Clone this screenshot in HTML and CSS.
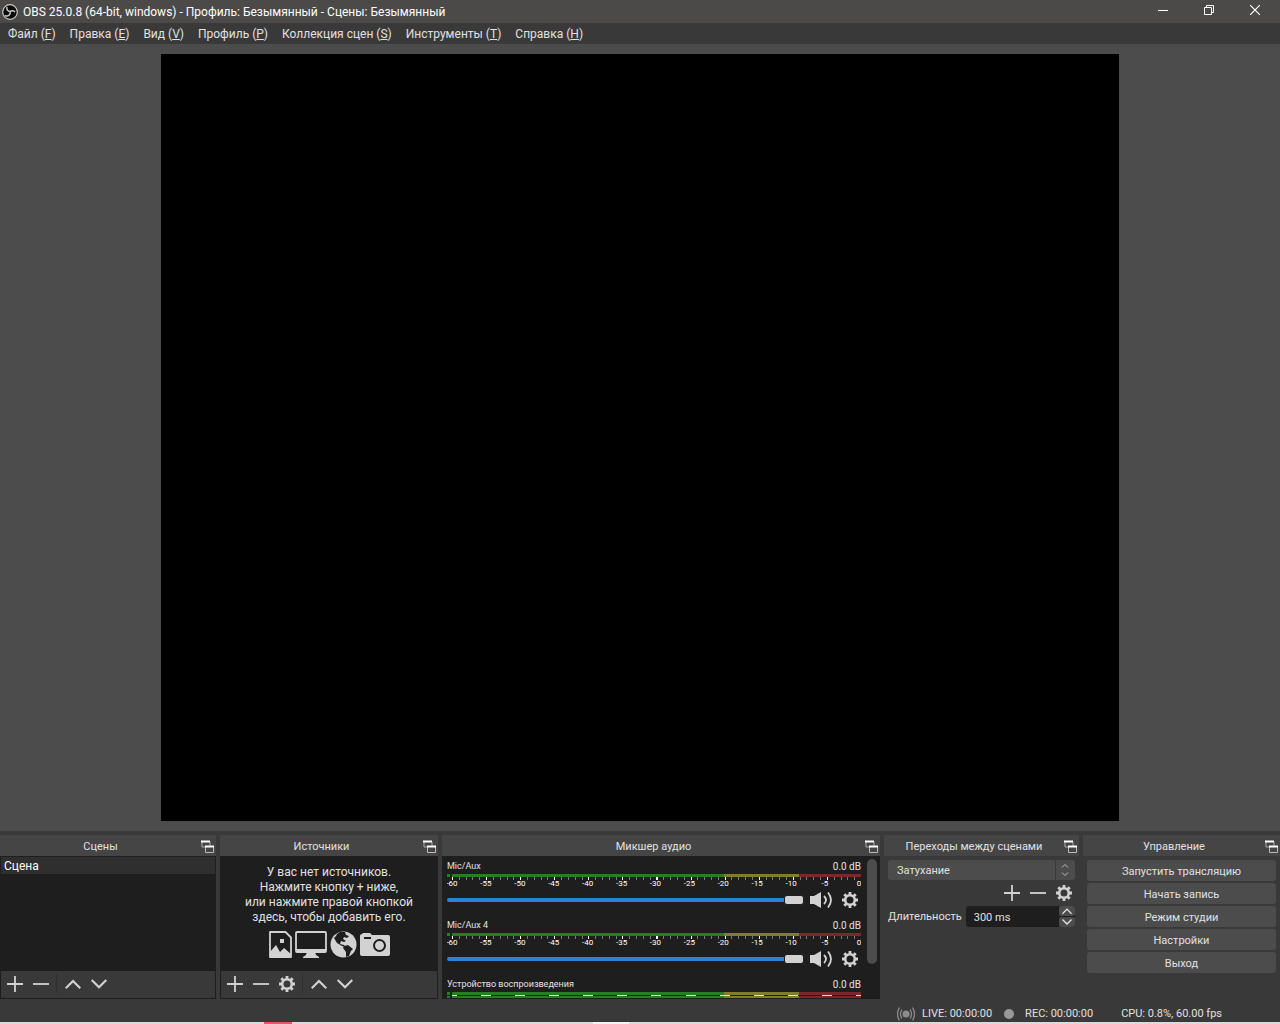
FILE: index.html
```
<!DOCTYPE html>
<html lang="ru">
<head>
    <meta charset="UTF-8">
    <title>OBS 25.0.8</title>
    <link rel="stylesheet" href="styles.css">
</head>
<body>
<svg class="sprite" aria-hidden="true">
    <symbol id="i-float" viewBox="0 0 14 14">
        <path d="M1 2v5h8V2" fill="none" stroke="#aaa"/>
        <path d="M0 1.500h9" stroke="#fff" stroke-width="2"/>
        <rect x="4" y="6" width="9" height="7" fill="#454545"/>
        <path d="M4.500 7v5.500h8V7" fill="none" stroke="#bbb"/>
        <path d="M4 6.500h9" stroke="#fff" stroke-width="2"/>
    </symbol>
    <symbol id="i-plus" viewBox="0 0 16 16"><path d="M8 0v16M0 8h16" stroke="currentColor" stroke-width="1.800"/></symbol>
    <symbol id="i-minus" viewBox="0 0 16 16"><path d="M0 8h16" stroke="currentColor" stroke-width="1.800"/></symbol>
    <symbol id="i-up" viewBox="0 0 16 16"><path d="M.7 12.300L8 5l7.300 7.300" fill="none" stroke="currentColor" stroke-width="2.200"/></symbol>
    <symbol id="i-down" viewBox="0 0 16 16"><path d="M.7 4L8 11.300 15.300 4" fill="none" stroke="currentColor" stroke-width="2.200"/></symbol>
    <symbol id="i-gear" viewBox="0 0 16 16">
        <circle cx="8" cy="8" r="4.800" fill="none" stroke="currentColor" stroke-width="2.600"/>
        <path d="M8 0v3M8 13v3M0 8h3M13 8h3M2.300 2.300l2.200 2.200M11.500 11.500l2.200 2.200M2.300 13.700l2.200-2.200M11.500 4.500l2.200-2.200" stroke="currentColor" stroke-width="2.800"/>
    </symbol>
    <symbol id="i-speaker" viewBox="0 0 22 16">
        <path d="M0 4h4l7-4v16l-7-4H0z" fill="currentColor"/>
        <path d="M14 4q4 4 0 8M18 .5q6 7.500 0 15" fill="none" stroke="currentColor" stroke-width="1.800"/>
    </symbol>
</svg>

<header class="titlebar">
    <svg class="logo" viewBox="0 0 16 16">
        <circle cx="8" cy="8" r="7.300" fill="#0c0c0c" stroke="#c8c8c8" stroke-width="1.200"/>
        <path d="M5 3c-.6 2.500.8 4.400 3 4.600M8 7.600c1.500-1.400 3.800-1.300 5 .6M8 7.600c.6 2-.4 4-2.600 4.400-1 .2-1.900-.1-2.600-.8" fill="none" stroke="#c8c8c8" stroke-width="1.500"/>
    </svg>
    <h1>OBS 25.0.8 (64-bit, windows) - Профиль: Безымянный - Сцены: Безымянный</h1>
    <div class="window-buttons">
        <button aria-label="Свернуть"><svg viewBox="0 0 10 10"><path d="M0 5.500h10" stroke="#fff"/></svg></button>
        <button aria-label="Восстановить"><svg viewBox="0 0 10 10"><path d="M.5 2.500h7v7h-7zM2.500 2V.5h7v7H8" fill="none" stroke="#fff"/></svg></button>
        <button aria-label="Закрыть"><svg viewBox="0 0 10 10"><path d="M0 0l10 10M10 0L0 10" stroke="#fff" stroke-width="1.200"/></svg></button>
    </div>
</header>

<nav class="menubar">
    <button>Файл (<u>F</u>)</button>
    <button>Правка (<u>E</u>)</button>
    <button>Вид (<u>V</u>)</button>
    <button>Профиль (<u>P</u>)</button>
    <button>Коллекция сцен (<u>S</u>)</button>
    <button>Инструменты (<u>T</u>)</button>
    <button>Справка (<u>H</u>)</button>
</nav>

<main class="preview">
    <div class="canvas"></div>
</main>

<div class="docks">
    <section class="dock">
        <div class="dock-title"><h2>Сцены</h2><button aria-label="Открепить"><svg><use href="#i-float"/></svg></button></div>
        <div class="dock-list">
            <ul class="scenes">
                <li class="selected">Сцена</li>
            </ul>
            <div class="toolbar">
                <button aria-label="Добавить"><svg><use href="#i-plus"/></svg></button>
                <button aria-label="Удалить"><svg><use href="#i-minus"/></svg></button>
                <span class="sep"></span>
                <button aria-label="Вверх"><svg><use href="#i-up"/></svg></button>
                <button aria-label="Вниз"><svg><use href="#i-down"/></svg></button>
            </div>
        </div>
    </section>

    <section class="dock">
        <div class="dock-title"><h2>Источники</h2><button aria-label="Открепить"><svg><use href="#i-float"/></svg></button></div>
        <div class="dock-list">
            <div class="empty">
                <p>У вас нет источников.<br>Нажмите кнопку + ниже,<br>или нажмите правой кнопкой<br>здесь, чтобы добавить его.</p>
                <div class="source-icons">
                    <svg width="23" height="27" viewBox="0 0 23 27">
                        <path d="M1 1h15.500L22 6.500V26H1z" fill="none" stroke="#d2d2d2" stroke-width="1.800" stroke-linejoin="round"/>
                        <path d="M1 26v-5l6-7 4 7 4-4 7 6v3zM11 8h4v4h-4z" fill="#d2d2d2"/>
                    </svg>
                    <svg width="32" height="27" viewBox="0 0 32 27">
                        <rect x="1" y="1" width="30" height="20" rx="1" fill="none" stroke="#d2d2d2" stroke-width="1.800"/>
                        <path d="M1 18h30v3H1zM12 21h8l1 3 3 2v1H8v-1l3-2z" fill="#d2d2d2"/>
                    </svg>
                    <svg width="27" height="27" viewBox="0 0 27 27">
                        <circle cx="13.500" cy="13.500" r="13" fill="#d2d2d2"/>
                        <path d="M10 1l5 0 1 3 3 1-2 2-3-1-1 2 3 2-2 1-3-1-1 3 4 1 1 2-3-1-5-3-3-5 2-2 1-2zM14 15l4-1 5 4-2 2-2 5-3 1 0-5-3-4z" fill="#1f1e1f"/>
                    </svg>
                    <svg width="30" height="27" viewBox="0 0 30 27">
                        <path d="M0 5q0-2 2-2l1-1h7l2 2h16q2 0 2 2v17q0 2-2 2H2q-2 0-2-2z" fill="#d2d2d2"/>
                        <path d="M4 7h7" stroke="#1f1e1f" stroke-width="2"/>
                        <circle cx="19.500" cy="14.500" r="5.500" fill="none" stroke="#1f1e1f" stroke-width="2"/>
                    </svg>
                </div>
            </div>
            <div class="toolbar">
                <button aria-label="Добавить"><svg><use href="#i-plus"/></svg></button>
                <button aria-label="Удалить"><svg><use href="#i-minus"/></svg></button>
                <button aria-label="Свойства"><svg><use href="#i-gear"/></svg></button>
                <span class="sep"></span>
                <button aria-label="Вверх"><svg><use href="#i-up"/></svg></button>
                <button aria-label="Вниз"><svg><use href="#i-down"/></svg></button>
            </div>
        </div>
    </section>

    <section class="dock">
        <div class="dock-title"><h2>Микшер аудио</h2><button aria-label="Открепить"><svg><use href="#i-float"/></svg></button></div>
        <div class="mixer">
            <div class="channels">
                <div class="channel">
                    <div class="channel-head"><label for="vol1">Mic/Aux</label><span class="db">0.0 dB</span></div>
                    <div class="meter"></div>
                    <div class="ticks"></div>
                    <ul class="scale"><li>-60</li><li>-55</li><li>-50</li><li>-45</li><li>-40</li><li>-35</li><li>-30</li><li>-25</li><li>-20</li><li>-15</li><li>-10</li><li>-5</li><li>0</li></ul>
                    <div class="volume">
                        <input type="range" id="vol1" min="0" max="100" value="100">
                        <button aria-label="Отключить звук"><svg class="speaker"><use href="#i-speaker"/></svg></button>
                        <button aria-label="Параметры"><svg><use href="#i-gear"/></svg></button>
                    </div>
                </div>
                <div class="channel">
                    <div class="channel-head"><label for="vol2">Mic/Aux 4</label><span class="db">0.0 dB</span></div>
                    <div class="meter"></div>
                    <div class="ticks"></div>
                    <ul class="scale"><li>-60</li><li>-55</li><li>-50</li><li>-45</li><li>-40</li><li>-35</li><li>-30</li><li>-25</li><li>-20</li><li>-15</li><li>-10</li><li>-5</li><li>0</li></ul>
                    <div class="volume">
                        <input type="range" id="vol2" min="0" max="100" value="100">
                        <button aria-label="Отключить звук"><svg class="speaker"><use href="#i-speaker"/></svg></button>
                        <button aria-label="Параметры"><svg><use href="#i-gear"/></svg></button>
                    </div>
                </div>
                <div class="channel">
                    <div class="channel-head"><span>Устройство воспроизведения</span><span class="db">0.0 dB</span></div>
                    <div class="meter"></div>
                    <div class="meter-gap"></div>
                    <div class="meter"></div>
                </div>
            </div>
            <div class="scrollbar"></div>
        </div>
    </section>

    <section class="dock">
        <div class="dock-title"><h2>Переходы между сценами</h2><button aria-label="Открепить"><svg><use href="#i-float"/></svg></button></div>
        <div class="transitions">
            <div class="combo">
                <select aria-label="Переход"><option>Затухание</option></select>
                <svg viewBox="0 0 20 20"><path d="M.5 0v20" stroke="#3a3939"/><path d="M7 7.500l3-3 3 3M7 12.500l3 3 3-3" fill="none" stroke="#bbb"/></svg>
            </div>
            <div class="transition-tools">
                <button aria-label="Добавить"><svg><use href="#i-plus"/></svg></button>
                <button aria-label="Удалить"><svg><use href="#i-minus"/></svg></button>
                <button aria-label="Свойства"><svg><use href="#i-gear"/></svg></button>
            </div>
            <div class="duration">
                <label for="duration">Длительность</label>
                <div class="spin">
                    <input type="text" id="duration" value="300 ms">
                    <div class="spin-buttons">
                        <button aria-label="Больше"><svg><use href="#i-up"/></svg></button>
                        <button aria-label="Меньше"><svg><use href="#i-down"/></svg></button>
                    </div>
                </div>
            </div>
        </div>
    </section>

    <section class="dock">
        <div class="dock-title"><h2>Управление</h2><button aria-label="Открепить"><svg><use href="#i-float"/></svg></button></div>
        <div class="controls">
            <button>Запустить трансляцию</button>
            <button>Начать запись</button>
            <button>Режим студии</button>
            <button>Настройки</button>
            <button>Выход</button>
        </div>
    </section>
</div>

<footer class="statusbar">
    <div class="status">
        <svg width="18" height="14" viewBox="0 0 18 14">
            <circle cx="9" cy="7" r="3.500" fill="#8c8c8c"/>
            <path d="M5 2.500q-3 4.500 0 9M13 2.500q3 4.500 0 9M2.500.5q-4 6.500 0 13M15.500.5q4 6.500 0 13" fill="none" stroke="#8c8c8c" stroke-width="1.300"/>
        </svg>
        <span>LIVE: 00:00:00</span>
    </div>
    <div class="status rec"><i class="dot"></i><span>REC: 00:00:00</span></div>
    <div class="status cpu">CPU: 0.8%, 60.00 fps</div>
</footer>
<div class="taskbar"><span class="task-red"></span><span class="task-light"></span></div>
</body>
</html>
```
FILE: styles.css
```
*{
    margin: 0;
    padding: 0;
    box-sizing: border-box;
}
body{
    height: 100vh;
    display: flex;
    flex-direction: column;
    overflow: hidden;
    background: #3a3939;
    color: #e1e0e1;
    font: 11px/16px Roboto, "Noto Sans", sans-serif;
}
ul{
    list-style: none;
}
button, input, select{
    font: inherit;
    color: inherit;
    border: 0;
    background: none;
}
svg{
    display: block;
}
.sprite{
    position: absolute;
    width: 0;
    height: 0;
}
h1, h2{
    font-size: 12px;
    font-weight: normal;
}

/* title and menu */
.titlebar{
    height: 23px;
    flex: none;
    display: flex;
    align-items: center;
    gap: 5px;
    padding: 0 2px;
    background: #4b4a48;
}
.titlebar h1{
    flex: 1;
    color: #fff;
}
.logo{
    width: 16px;
    height: 16px;
}
.window-buttons{
    display: flex;
    align-self: flex-start;
}
.window-buttons button{
    width: 46px;
    height: 20px;
    display: flex;
    align-items: center;
    justify-content: center;
}
.window-buttons svg{
    width: 10px;
    height: 10px;
}
.menubar{
    height: 21px;
    flex: none;
    display: flex;
    padding: 0 1px;
    font-size: 12px;
}
.menubar button{
    padding: 0 7px;
}

/* preview */
.preview{
    flex: 1;
    min-height: 0;
    padding: 10px;
    display: flex;
    justify-content: center;
    background: #4c4c4c;
}
.canvas{
    height: 100%;
    aspect-ratio: 5 / 4;
    background: #000;
}

/* docks */
.docks{
    height: 172px;
    flex: none;
    padding: 4px 0;
    display: grid;
    grid-template-columns: 216fr 218fr 438fr 195fr 197fr;
    gap: 4px;
}
.dock{
    min-width: 0;
    min-height: 0;
    display: flex;
    flex-direction: column;
}
.dock-title{
    height: 21px;
    flex: none;
    display: flex;
    align-items: center;
    padding: 2px 1px 0 0;
    background: #454545;
}
.dock-title h2{
    flex: 1;
    font-size: 11px;
    text-align: center;
    white-space: nowrap;
}
.dock-title svg{
    width: 14px;
    height: 14px;
}
.dock-list{
    flex: 1;
    display: flex;
    flex-direction: column;
    padding: 1px;
    background: #1f1e1f;
}
.scenes{
    flex: 1;
    font-size: 12px;
}
.scenes li{
    height: 17px;
    padding-left: 3px;
    line-height: 18px;
    color: #fff;
}
.scenes li.selected{
    background: #2f2f2f;
}
.toolbar{
    height: 27px;
    display: flex;
    align-items: center;
    gap: 10px;
    padding: 0 6px 2px;
    background: #3a3939;
}
.toolbar svg, .volume svg, .transition-tools svg{
    width: 16px;
    height: 16px;
    color: #d2d2d2;
}
.toolbar .sep{
    width: 1px;
    height: 19px;
    margin: 0 -2px 0 -3px;
    background: #2f2f2f;
}
.empty{
    flex: 1;
    display: flex;
    flex-direction: column;
    align-items: center;
    gap: 6px;
    padding-top: 8px;
    font-size: 12px;
    line-height: 15px;
    text-align: center;
    white-space: nowrap;
}
.source-icons{
    display: flex;
    gap: 3px;
}

/* mixer */
.mixer{
    flex: 1;
    min-height: 0;
    display: flex;
    gap: 6px;
    padding: 3px 3px 1px 5px;
    background: #1f1e1f;
    overflow: hidden;
}
.channels{
    flex: 1;
    overflow: hidden;
}
.channel{
    height: 59px;
}
.channel-head{
    height: 15px;
    display: flex;
    justify-content: space-between;
    font-size: 9px;
    line-height: 15px;
}
.db{
    font-size: 10px;
}
.meter{
    height: 3px;
    background: linear-gradient(to right, #267f26 0 3px, #1f1e1f 3px 5px, #267f26 5px 67%, #7f7f26 67% 85%, #7f2626 85%);
}
.meter-gap{
    height: 1px;
    margin-left: 5px;
    background: repeating-linear-gradient(to right, #ddd 0 5px, transparent 5px calc(100% / 12 - 5px), #ddd calc(100% / 12 - 5px) calc(100% / 12));
}
.ticks{
    height: 3px;
    margin-left: 5px;
    background:
        repeating-linear-gradient(to right, #fff 0 1px, transparent 1px calc(100% / 12)),
        repeating-linear-gradient(to right, #7a7a7a 0 1px, transparent 1px calc(100% / 60));
}
.scale{
    height: 7px;
    display: flex;
    justify-content: space-between;
    margin: 0 2px 0 5px;
    color: #fff;
    font-size: 8px;
    line-height: 7px;
}
.scale li{
    width: 0;
    display: flex;
    justify-content: center;
}
.volume{
    height: 26px;
    display: flex;
    align-items: center;
    gap: 10px;
    padding-right: 3px;
}
.volume input{
    flex: 1;
    min-width: 0;
    height: 16px;
    margin-right: -4px;
    appearance: none;
}
.volume input::-webkit-slider-runnable-track{
    height: 4px;
    border-radius: 2px;
    background: #2a82da;
}
.volume input::-webkit-slider-thumb{
    appearance: none;
    width: 20px;
    height: 10px;
    margin-top: -3px;
    border: 1px solid #1f1e1f;
    border-radius: 3px;
    background: #d2d2d2;
}
.volume .speaker{
    width: 22px;
}
.scrollbar{
    width: 10px;
    height: 105px;
    border-radius: 5px;
    background: #4c4c4c;
}

/* transitions */
.transitions{
    padding: 4px;
}
.combo{
    position: relative;
    height: 20px;
}
.combo select{
    width: 100%;
    height: 20px;
    padding: 2px 0 0 9px;
    appearance: none;
    border-radius: 3px;
    background: #4c4c4c;
}
.combo svg{
    position: absolute;
    top: 0;
    right: 0;
    width: 20px;
    height: 20px;
    pointer-events: none;
}
.transition-tools{
    height: 26px;
    display: flex;
    align-items: center;
    justify-content: flex-end;
    gap: 10px;
    padding-right: 3px;
}
.duration{
    display: flex;
    align-items: center;
    gap: 4px;
}
.spin{
    flex: 1;
    min-width: 0;
    height: 21px;
    display: flex;
    border-radius: 3px;
    background: #1f1e1f;
    overflow: hidden;
}
.spin input{
    flex: 1;
    min-width: 0;
    padding: 2px 0 0 8px;
}
.spin-buttons{
    width: 16px;
    display: flex;
    flex-direction: column;
    gap: 1px;
}
.spin-buttons button{
    height: 10px;
    display: flex;
    align-items: center;
    justify-content: center;
    border-radius: 2px;
    background: #4c4c4c;
}
.spin-buttons svg{
    width: 10px;
    height: 10px;
}

/* controls */
.controls{
    display: flex;
    flex-direction: column;
    gap: 2px;
    padding: 4px;
}
.controls button{
    height: 21px;
    padding-top: 2px;
    border-radius: 3px;
    background: #4c4c4c;
}

/* status bar */
.statusbar{
    height: 19px;
    flex: none;
    display: flex;
    align-items: center;
    justify-content: flex-end;
    padding: 2px 58px 0 0;
}
.status{
    display: flex;
    align-items: center;
    gap: 7px;
}
.status.rec{
    gap: 11px;
    margin: 0 28px 0 12px;
}
.dot{
    width: 10px;
    height: 10px;
    border-radius: 50%;
    background: #999;
}
.taskbar{
    height: 2px;
    flex: none;
    display: flex;
    background: #dcdada;
}
.task-red{
    width: 28px;
    margin-left: 264px;
    background: #e05c5c;
}
.task-light{
    width: 36px;
    margin-left: 301px;
    background: #f4f2f2;
}
```
